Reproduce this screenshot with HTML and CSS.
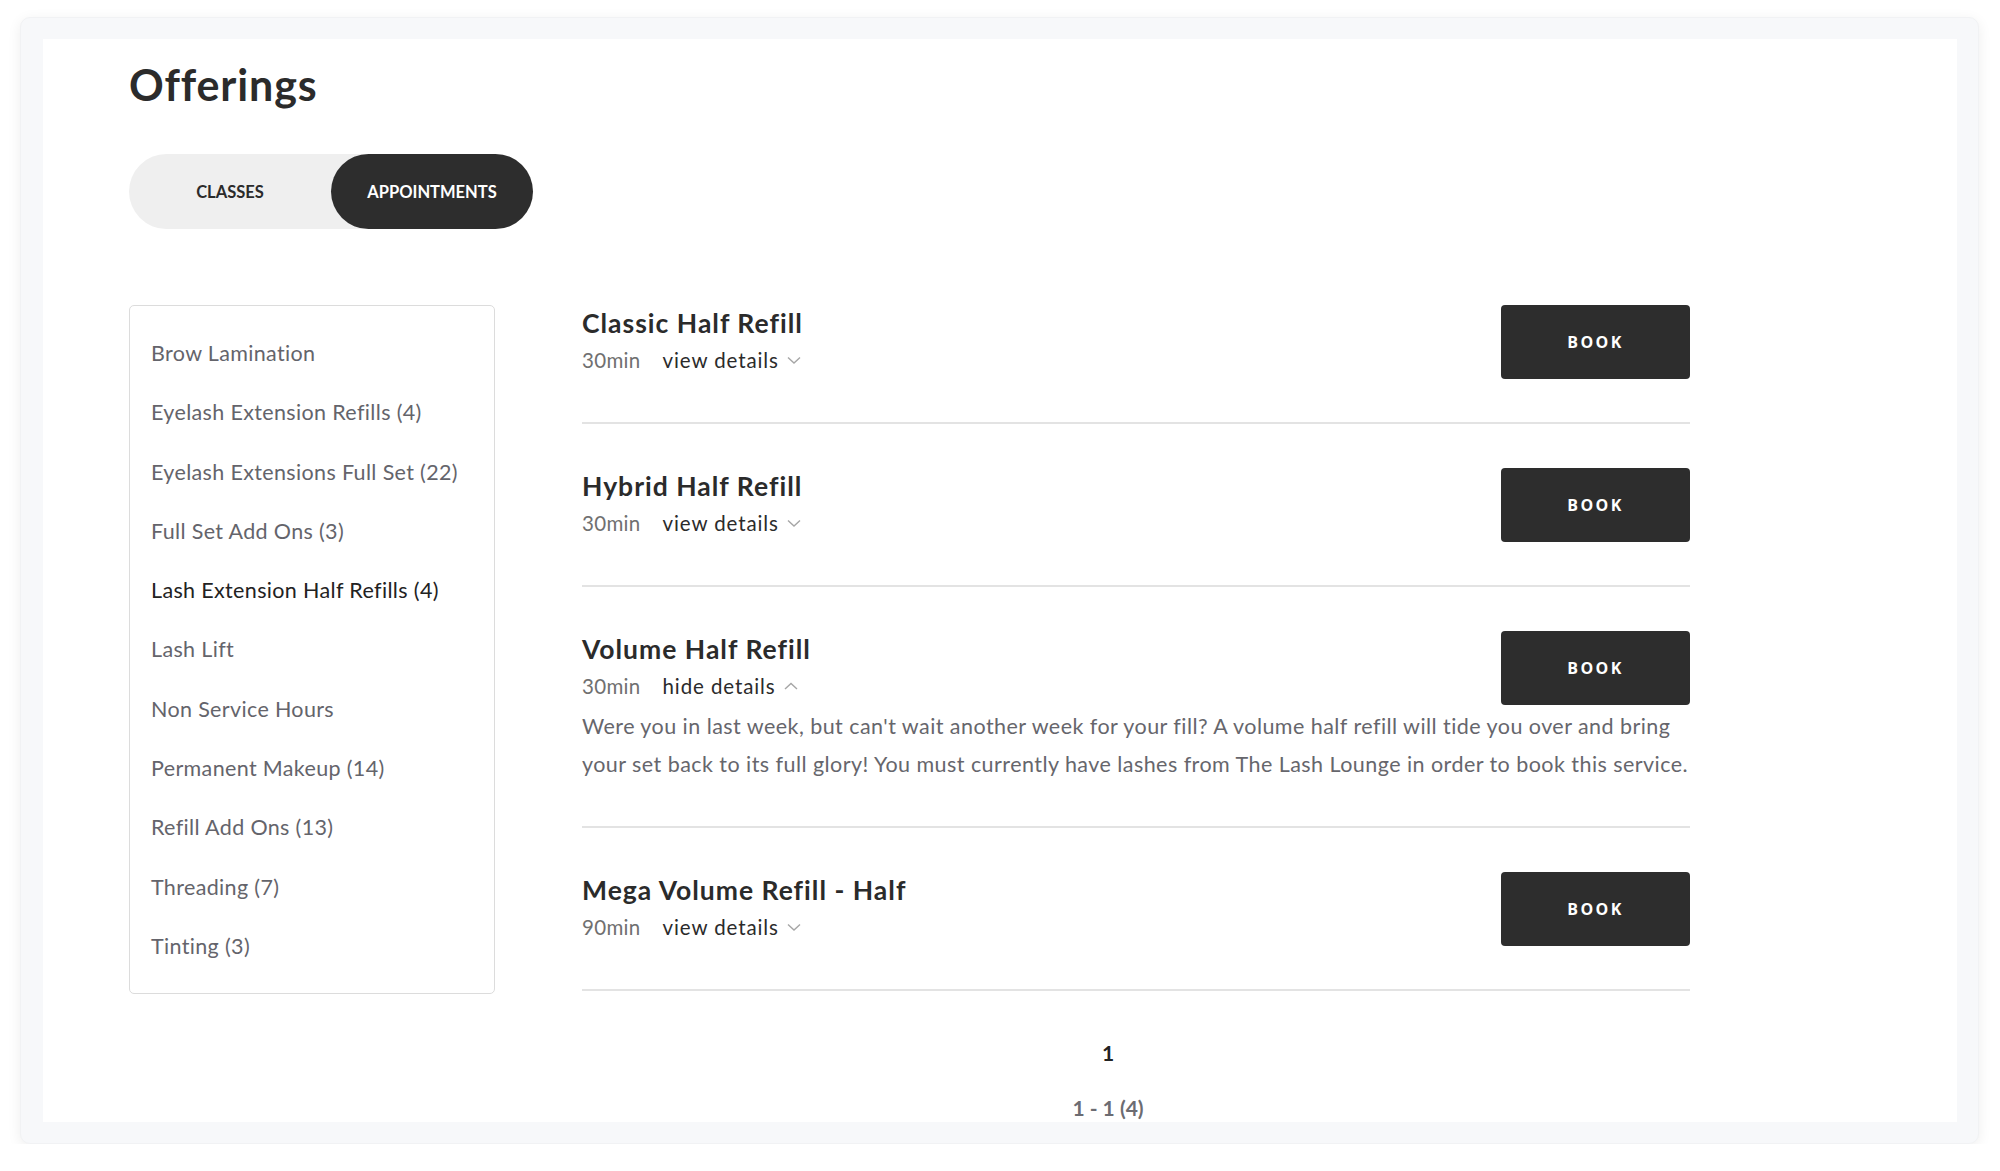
FILE: index.html
```html
<!DOCTYPE html>
<html lang="en">
<head>
<meta charset="utf-8">
<title>Offerings</title>
<link rel="stylesheet" href="styles.css">
</head>
<body>
<div class="window">
  <div class="content">
    <h1 class="title">Offerings</h1>
    <div class="toggle">
      <button class="toggle-btn">CLASSES</button>
      <button class="toggle-btn active">APPOINTMENTS</button>
    </div>
    <div class="main">
      <aside class="sidebar">
        <ul class="cats">
          <li class="cat">Brow Lamination</li>
          <li class="cat">Eyelash Extension Refills (4)</li>
          <li class="cat">Eyelash Extensions Full Set (22)</li>
          <li class="cat">Full Set Add Ons (3)</li>
          <li class="cat active">Lash Extension Half Refills (4)</li>
          <li class="cat">Lash Lift</li>
          <li class="cat">Non Service Hours</li>
          <li class="cat">Permanent Makeup (14)</li>
          <li class="cat">Refill Add Ons (13)</li>
          <li class="cat">Threading (7)</li>
          <li class="cat">Tinting (3)</li>
        </ul>
      </aside>
      <section class="list">
        <div class="item">
          <div class="row">
            <div class="info">
              <h2 class="name">Classic Half Refill</h2>
              <div class="meta"><span class="dur">30min</span><span class="details">view details <svg class="chev" viewBox="0 0 14 8" width="14" height="8"><polyline points="1,1.5 7,7 13,1.5"/></svg></span></div>
            </div>
            <button class="book">BOOK</button>
          </div>
        </div>
        <div class="item">
          <div class="row">
            <div class="info">
              <h2 class="name">Hybrid Half Refill</h2>
              <div class="meta"><span class="dur">30min</span><span class="details">view details <svg class="chev" viewBox="0 0 14 8" width="14" height="8"><polyline points="1,1.5 7,7 13,1.5"/></svg></span></div>
            </div>
            <button class="book">BOOK</button>
          </div>
        </div>
        <div class="item">
          <div class="row">
            <div class="info">
              <h2 class="name">Volume Half Refill</h2>
              <div class="meta"><span class="dur">30min</span><span class="details">hide details <svg class="chev" viewBox="0 0 14 8" width="14" height="8"><polyline points="1,7 7,1.5 13,7"/></svg></span></div>
            </div>
            <button class="book">BOOK</button>
          </div>
          <p class="desc">Were you in last week, but can't wait another week for your fill? A volume half refill will tide you over and bring<br>your set back to its full glory! You must currently have lashes from The Lash Lounge in order to book this service.</p>
        </div>
        <div class="item">
          <div class="row">
            <div class="info">
              <h2 class="name">Mega Volume Refill - Half</h2>
              <div class="meta"><span class="dur">90min</span><span class="details">view details <svg class="chev" viewBox="0 0 14 8" width="14" height="8"><polyline points="1,1.5 7,7 13,1.5"/></svg></span></div>
            </div>
            <button class="book">BOOK</button>
          </div>
        </div>
        <div class="pager">
          <div class="page">1</div>
          <div class="range">1 - 1 (4)</div>
        </div>
      </section>
    </div>
  </div>
</div>
</body>
</html>
```

FILE: styles.css
```css
* { box-sizing: border-box; }

html, body {
  margin: 0;
  padding: 0;
  background: #ffffff;
}

body {
  font-family: "Lato", "Noto Sans", sans-serif;
  color: #2b2b2b;
}

.window {
  margin: 17px 20px 0 20px;
  width: 1959px;
  height: 1127px;
  padding: 21px 21px 21px 22px;
  background: #f7f8fa;
  border-radius: 10px;
  border: 1px solid #f1f2f4;
  box-shadow: 0 3px 14px rgba(0, 0, 0, 0.07);
}

.content {
  background: #ffffff;
  height: 100%;
  padding: 20px 0 0 86px;
  overflow: hidden;
}

.title {
  margin: 0;
  font-size: 43px;
  line-height: 52px;
  font-weight: 700;
  letter-spacing: 0.9px;
  color: #2b2b2b;
}

.toggle {
  margin-top: 43px;
  display: flex;
  width: 404px;
  height: 75px;
  background: #efefef;
  border-radius: 38px;
}

.toggle-btn {
  flex: 1;
  border: none;
  background: transparent;
  border-radius: 38px;
  font-family: "Lato", sans-serif;
  font-weight: 700;
  font-size: 16.5px;
  letter-spacing: 0;
  color: #2b2b2b;
  padding: 0;
}

.toggle-btn.active {
  background: #2d2d2d;
  color: #ffffff;
}

.main {
  margin-top: 76px;
  display: flex;
  align-items: flex-start;
  gap: 87px;
}

.sidebar {
  width: 366px;
  border: 1px solid #dcdcdc;
  border-radius: 5px;
  padding: 18px 0 17px 21px;
}

.cats {
  list-style: none;
  margin: 0;
  padding: 0;
}

.cat {
  height: 59.3px;
  line-height: 59.3px;
  font-size: 21.5px;
  letter-spacing: 0.35px;
  color: #64646b;
}

.cat.active {
  color: #222222;
}

.list {
  width: 1108px;
}

.item {
  padding: 44px 0 43px;
  border-bottom: 2px solid #e3e3e3;
}

.item:first-child {
  padding-top: 0;
}

.row {
  display: flex;
  justify-content: space-between;
  align-items: flex-start;
}

.name {
  margin: 0;
  font-size: 26.5px;
  line-height: 36px;
  font-weight: 700;
  letter-spacing: 1px;
  color: #2b2b2b;
}

.meta {
  display: flex;
  align-items: center;
  height: 38px;
  font-size: 20.5px;
}

.dur {
  color: #707070;
  margin-right: 22px;
  letter-spacing: 0.3px;
}

.details {
  color: #2b2b2b;
  letter-spacing: 0.9px;
  display: inline-flex;
  align-items: center;
}

.chev {
  margin-left: 8px;
  fill: none;
  stroke: #a6a6a6;
  stroke-width: 1.4;
}

.book {
  width: 189px;
  height: 74px;
  border: none;
  border-radius: 4px;
  background: #2d2d2d;
  color: #ffffff;
  font-family: "Open Sans", "Lato", sans-serif;
  font-weight: 700;
  font-size: 16px;
  letter-spacing: 2.4px;
  padding: 0;
}

.desc {
  margin: 2px 0 0;
  font-size: 21.5px;
  line-height: 38px;
  letter-spacing: 0.45px;
  color: #66666c;
  white-space: nowrap;
}

.pager {
  width: 1052px;
  text-align: center;
  padding-top: 47px;
}

.page {
  font-size: 21px;
  line-height: 30px;
  font-weight: 700;
  color: #222222;
}

.range {
  margin-top: 25px;
  font-size: 21px;
  line-height: 30px;
  font-weight: 700;
  color: #6c6c72;
}
```
